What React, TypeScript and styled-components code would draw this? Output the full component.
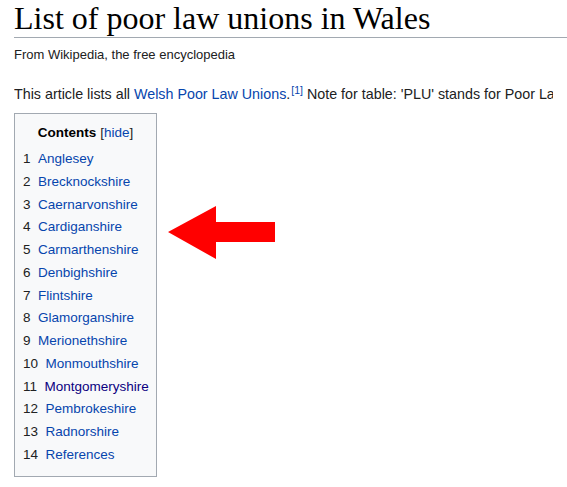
import React from "react";
import styled, { createGlobalStyle } from "styled-components";

const Global = createGlobalStyle`
  html, body { margin: 0; padding: 0; background: #fff; overflow: hidden; }
  body { font-family: "Liberation Sans", Arial, sans-serif; color: #202122; }
`;

const Page = styled.div`
  position: relative;
  width: 567px;
  height: 487px;
  overflow: hidden;
  padding: 0 0 0 14px;
  box-sizing: border-box;
`;

const Title = styled.h1`
  margin: -1px 0 0 0;
  padding: 0;
  font-family: "Liberation Serif", "Times New Roman", serif;
  font-weight: normal;
  font-size: 32px;
  line-height: 38.4px;
  color: #000;
  border-bottom: 1px solid #a2a9b1;
  white-space: nowrap;
`;

const SiteSub = styled.div`
  margin-top: 6.7px;
  font-size: 13px;
  line-height: 20.8px;
  color: #202122;
`;

const Para = styled.p`
  margin: 17px 0 0 0;
  width: 539px;
  overflow: hidden;
  font-size: 14.3px;
  line-height: 22.88px;
  height: 22.88px;
  white-space: nowrap;
`;

const Link = styled.a<{ $visited?: boolean }>`
  color: ${(p) => (p.$visited ? "#0b0080" : "#0645ad")};
  text-decoration: none;
`;

const Sup = styled.span`
  position: relative;
  top: -5px;
  font-size: 10.5px;
  margin-left: 1px;
`;

const Toc = styled.div`
  margin-top: 7.2px;
  width: 143px;
  box-sizing: border-box;
  border: 1px solid #a2a9b1;
  background: #f8f9fa;
  padding: 8px 7px 9px 7px;
  font-size: 13.5px;
`;

const TocTitle = styled.div`
  text-align: center;
  line-height: 21.3px;
  margin-bottom: 5px;
`;

const TocHeading = styled.span`
  font-weight: bold;
  color: #000;
`;

const Toggle = styled.span`
  font-weight: normal;
  margin-left: 4px;
  color: #202122;
`;

const List = styled.ul`
  list-style: none;
  margin: 0;
  padding: 0;
`;

const Item = styled.li`
  display: flex;
  height: 22.74px;
  line-height: 22.74px;
  white-space: nowrap;
`;

const Num = styled.span`
  color: #202122;
  padding-left: 1px;
  padding-right: 7.5px;
`;

const Arrow = styled.svg`
  position: absolute;
  left: 0;
  top: 0;
  pointer-events: none;
`;

const items = [
  "Anglesey",
  "Brecknockshire",
  "Caernarvonshire",
  "Cardiganshire",
  "Carmarthenshire",
  "Denbighshire",
  "Flintshire",
  "Glamorganshire",
  "Merionethshire",
  "Monmouthshire",
  "Montgomeryshire",
  "Pembrokeshire",
  "Radnorshire",
  "References",
];

export default function App() {
  return (
    <>
      <Global />
      <Page>
        <Title>List of poor law unions in Wales</Title>
        <SiteSub>From Wikipedia, the free encyclopedia</SiteSub>
        <Para>
          This article lists all <Link href="#">Welsh Poor Law Unions</Link>.
          <Sup>
            <Link href="#">[1]</Link>
          </Sup>{" "}
          Note for table: 'PLU' stands for Poor Law Union, 'PLU' in 'Registration
          District' column.
        </Para>
        <Toc>
          <TocTitle>
            <TocHeading>Contents</TocHeading>
            <Toggle>
              [<Link href="#">hide</Link>]
            </Toggle>
          </TocTitle>
          <List>
            {items.map((name, i) => (
              <Item key={name}>
                <Num>{i + 1}</Num>
                <Link href="#" $visited={name === "Montgomeryshire"}>
                  {name}
                </Link>
              </Item>
            ))}
          </List>
        </Toc>
        <Arrow width="567" height="487" viewBox="0 0 567 487">
          <polygon
            points="168,232 216,206 216,222 275,222 275,242 216,242 216,259"
            fill="#ff0000"
          />
        </Arrow>
      </Page>
    </>
  );
}
